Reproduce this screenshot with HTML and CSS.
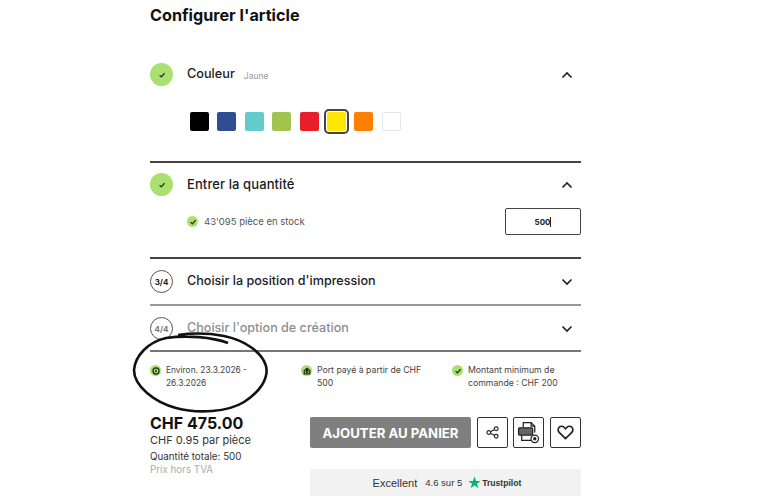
FILE: index.html
```html
<!DOCTYPE html>
<html lang="fr">
<head>
    <meta charset="UTF-8">
    <meta name="viewport" content="width=device-width, initial-scale=1.0">
    <title>Configurer l'article</title>
    <link rel="stylesheet" href="styles.css">
</head>
<body>
    <div class="main">
        <h1 class="title">Configurer l'article</h1>

        <section class="step step-color">
            <div class="step-head">
                <span class="badge done"><svg width="8" height="8" viewBox="0 0 10 10"><path d="M2 5.2 4.2 7.4 8.2 2.8" class="tick"/></svg></span>
                <span class="step-name">Couleur</span>
                <span class="step-value">Jaune</span>
                <svg class="chevron" width="12" height="8" viewBox="0 0 12 8"><path d="M1.5 6.5 6 2l4.5 4.5"/></svg>
            </div>
            <div class="swatches">
                <span class="swatch black"></span>
                <span class="swatch blue"></span>
                <span class="swatch cyan"></span>
                <span class="swatch green"></span>
                <span class="swatch red"></span>
                <span class="swatch yellow selected"></span>
                <span class="swatch orange"></span>
                <span class="swatch white"></span>
            </div>
        </section>

        <section class="step step-qty">
            <div class="step-head">
                <span class="badge done"><svg width="8" height="8" viewBox="0 0 10 10"><path d="M2 5.2 4.2 7.4 8.2 2.8" class="tick"/></svg></span>
                <span class="step-name">Entrer la quantité</span>
                <svg class="chevron" width="12" height="8" viewBox="0 0 12 8"><path d="M1.5 6.5 6 2l4.5 4.5"/></svg>
            </div>
            <div class="stock-row">
                <span class="mini-badge"><svg width="8" height="8" viewBox="0 0 10 10"><path d="M2 5.2 4.2 7.4 8.2 2.8" class="tick"/></svg></span>
                <span class="stock-text">43'095 pièce en stock</span>
                <div class="qty-input">500<span class="caret"></span></div>
            </div>
        </section>

        <section class="step step-closed">
            <div class="step-head">
                <span class="badge number">3/4</span>
                <span class="step-name">Choisir la position d'impression</span>
                <svg class="chevron" width="12" height="8" viewBox="0 0 12 8"><path d="M1.5 1.5 6 6l4.5-4.5"/></svg>
            </div>
        </section>

        <section class="step step-closed step-off">
            <div class="step-head">
                <span class="badge number">4/4</span>
                <span class="step-name">Choisir l'option de création</span>
                <svg class="chevron" width="12" height="8" viewBox="0 0 12 8"><path d="M1.5 1.5 6 6l4.5-4.5"/></svg>
            </div>
        </section>

        <div class="infos">
            <div class="info info-date">
                <span class="info-dot"><svg width="8" height="8" viewBox="0 0 10 10"><circle cx="5" cy="5" r="3.8" class="tick"/><path d="M5 3v2.2L3.8 6.4" class="tick"/></svg></span>
                <p>Environ. 23.3.2026 - 26.3.2026</p>
            </div>
            <div class="info info-port">
                <span class="info-dot"><svg width="8" height="8" viewBox="0 0 10 10"><path d="M1.500 4.500 5 1.500l3.500 3v4h-7z" class="tick"/><circle cx="5" cy="5.500" r="1.200" class="tick"/></svg></span>
                <p>Port payé à partir de CHF 500</p>
            </div>
            <div class="info info-min">
                <span class="info-dot"><svg width="8" height="8" viewBox="0 0 10 10"><path d="M2 5.2 4.2 7.4 8.2 2.8" class="tick"/></svg></span>
                <p>Montant minimum de commande : CHF 200</p>
            </div>
        </div>

        <div class="bottom">
            <div class="prices">
                <div class="price">CHF 475.00</div>
                <div class="unit-price">CHF 0.95 par pièce</div>
                <div class="total-qty">Quantité totale: 500</div>
                <div class="tax">Prix hors TVA</div>
            </div>
            <div class="actions">
                <div class="action-row">
                    <button class="add-btn">AJOUTER AU PANIER</button>
                    <button class="icon-btn" aria-label="Partager">
                        <svg width="13" height="13" viewBox="0 0 14 14" class="line"><circle cx="3" cy="7" r="2"/><circle cx="11" cy="3" r="2"/><circle cx="11" cy="11" r="2"/><path d="M4.800 6.100 9.200 3.900M4.800 7.900l4.400 2.200"/></svg>
                    </button>
                    <button class="icon-btn" aria-label="PDF">
                        <svg width="23" height="23" viewBox="0 0 22 22" class="line"><path d="M6 6V1.500h7.500L17 5v6"/><path d="M13.500 1.500V5H17"/><rect x="1.500" y="6.500" width="13.500" height="7" rx="1" fill="#666"/><path d="M4.500 13.500v5h9"/><circle cx="17" cy="17" r="3.600" fill="#fff"/><circle cx="17" cy="17" r="1" fill="#222"/></svg>
                    </button>
                    <button class="icon-btn" aria-label="Favori">
                        <svg width="17" height="15" viewBox="0 0 17 15" class="heart"><path d="M8.500 13.600 2.400 7.600C.6 5.800.9 3.400 2.300 2.200c1.600-1.300 3.900-1 5.200.5l1 1.100 1-1.100c1.300-1.500 3.600-1.800 5.200-.5 1.400 1.200 1.700 3.600-.1 5.400z"/></svg>
                    </button>
                </div>
                <div class="trust">
                    <span class="trust-word">Excellent</span>
                    <span class="trust-score">4.6 sur 5</span>
                    <svg width="13" height="13" viewBox="0 0 24 24"><path d="M12 1l3 8h8.500l-6.900 5.100 2.700 8.400L12 17.300 4.700 22.500l2.700-8.400L.5 9H9z" fill="#00b67a"/></svg>
                    <span class="trust-brand">Trustpilot</span>
                </div>
            </div>
        </div>
    </div>

    <!-- hand drawn circle around the delivery date -->
    <svg class="scribble" width="140" height="86" viewBox="0 0 140 86">
        <path d="M96 11C80 5 55 3 34 6 16 10 3 24 2 38c0 16 20 32 42 38 22 6 52 4 68-6 16-10 25-24 22-36C130 20 112 8 92 4 76 1 60 1 46 3"/>
    </svg>
</body>
</html>
```

FILE: styles.css
```css
* {
    box-sizing: border-box;
}

body {
    margin: 0;
    height: 500px;
    overflow: hidden;
    background-color: #fff;
    color: #1b1b22;
    font-family: Inter, "Open Sans", sans-serif;
    position: relative;
}

.main {
    width: 431px;
    margin-left: 150px;
}

.title {
    margin: 0;
    height: 30px;
    font-size: 16.2px;
    line-height: 30px;
    font-weight: 700;
    color: #111;
}

.step {
    border-bottom: 2px solid #444;
}

.step-head {
    display: flex;
    align-items: center;
    height: 23px;
}

.step-color {
    padding-top: 33px;
    height: 133px;
}

.step-qty {
    padding-top: 10px;
    height: 96px;
}

.step-closed {
    padding-top: 11px;
    height: 47px;
    border-bottom-color: #999;
}

.step-off {
    height: 46px;
    border-bottom-color: #777;
}

.step-off .step-name {
    color: #8d8d8d;
}

.step-off .badge {
    color: #777;
    border-color: #aaa;
}

.badge {
    flex: none;
    width: 23px;
    height: 23px;
    border-radius: 50%;
    display: flex;
    align-items: center;
    justify-content: center;
    margin-right: 14px;
}

.badge.done {
    background-color: #a9e070;
}

.badge.number {
    border: 1px solid #555;
    font-size: 8px;
    font-weight: 700;
}

.tick {
    fill: none;
    stroke: #1f2a18;
    stroke-width: 1.5;
}

.step-name {
    font-size: 12.7px;
    font-weight: 500;
    padding-bottom: 2px;
}

.step-qty .step-name {
    font-size: 13px;
    letter-spacing: .1px;
}

.step-closed .step-name {
    font-size: 12.6px;
}

.step-value {
    margin-left: 9px;
    margin-top: 3px;
    font-size: 8.5px;
    color: #999;
}

.chevron {
    margin-left: auto;
    margin-right: 8px;
}

.chevron path {
    fill: none;
    stroke: #222;
    stroke-width: 1.7;
}

.swatches {
    display: flex;
    gap: 8.4px;
    margin-top: 26px;
    padding-left: 40px;
}

.swatch {
    width: 19px;
    height: 19px;
    border-radius: 2px;
}

.black { background-color: #000; }
.blue { background-color: #2d4e93; }
.cyan { background-color: #62cbcb; }
.green { background-color: #a3c350; }
.red { background-color: #e71f2a; }
.orange { background-color: #ff8000; }

.white {
    background-color: #fff;
    border: 1px solid #e6e6e6;
}

.yellow {
    background-color: #ffe600;
}

.swatch.selected {
    outline: 2px solid #444;
    outline-offset: 1px;
}

.stock-row {
    display: flex;
    align-items: center;
    margin-top: 12px;
    padding-left: 37px;
}

.mini-badge {
    width: 11px;
    height: 11px;
    border-radius: 50%;
    background-color: #a9e070;
    display: flex;
    align-items: center;
    justify-content: center;
    margin-right: 6px;
}

.stock-text {
    font-size: 9.5px;
    color: #555;
}

.qty-input {
    margin-left: auto;
    width: 76px;
    height: 27px;
    border: 1.5px solid #444;
    border-radius: 2px;
    display: flex;
    align-items: center;
    justify-content: center;
    font-size: 8px;
    font-weight: 700;
}

.caret {
    width: 1px;
    height: 10px;
    background-color: #222;
}

.infos {
    display: flex;
    margin-top: 12px;
    height: 50px;
}

.info {
    display: flex;
    align-items: flex-start;
}

.info-date {
    width: 151px;
}

.info-port {
    width: 151px;
}

.info-min {
    width: 129px;
}

.info-dot {
    flex: none;
    width: 11px;
    height: 11px;
    margin: 1px 5px 0 0;
    border-radius: 50%;
    background-color: #a9e070;
    display: flex;
    align-items: center;
    justify-content: center;
}

.info p {
    margin: 0;
    width: 112px;
    font-size: 8.7px;
    line-height: 13px;
    color: #444;
}

.info-date p {
    width: 100px;
    font-size: 8.4px;
}

.bottom {
    display: flex;
}

.prices {
    width: 160px;
}

.price {
    font-size: 16px;
    line-height: 19px;
    font-weight: 700;
    color: #111;
}

.unit-price {
    font-size: 11px;
    line-height: 15px;
    color: #333;
}

.total-qty {
    margin-top: 2px;
    font-size: 9.8px;
    line-height: 13px;
    color: #333;
}

.tax {
    font-size: 9.8px;
    line-height: 14px;
    color: #aaa;
}

.actions {
    width: 271px;
    padding-top: 3px;
}

.action-row {
    display: flex;
    justify-content: space-between;
}

.add-btn {
    width: 161px;
    height: 31px;
    border: none;
    border-radius: 2px;
    background-color: #7f7f7f;
    color: #fff;
    font-family: inherit;
    font-size: 13.2px;
    font-weight: 700;
    padding: 0;
}

.icon-btn {
    flex: none;
    width: 31px;
    height: 31px;
    padding: 0;
    border: 1.5px solid #333;
    border-radius: 2px;
    background-color: #fff;
    display: flex;
    align-items: center;
    justify-content: center;
}

.line {
    fill: none;
    stroke: #222;
    stroke-width: 1.2;
}

.heart {
    fill: none;
    stroke: #222;
    stroke-width: 1.7;
}

.trust {
    margin-top: 21px;
    height: 27px;
    padding-left: 3px;
    background-color: #f2f2f2;
    display: flex;
    align-items: center;
    justify-content: center;
    font-family: "Liberation Sans", Arial, sans-serif;
    color: #333;
}

.trust-word {
    font-size: 11px;
    margin-right: 8px;
}

.trust-score {
    font-size: 9.5px;
    margin-right: 6px;
}

.trust-brand {
    font-size: 8.6px;
    font-weight: 700;
    margin-left: 1px;
}

.scribble {
    position: absolute;
    left: 132px;
    top: 332px;
    fill: none;
    stroke: #111;
    stroke-width: 2.6;
}
```
